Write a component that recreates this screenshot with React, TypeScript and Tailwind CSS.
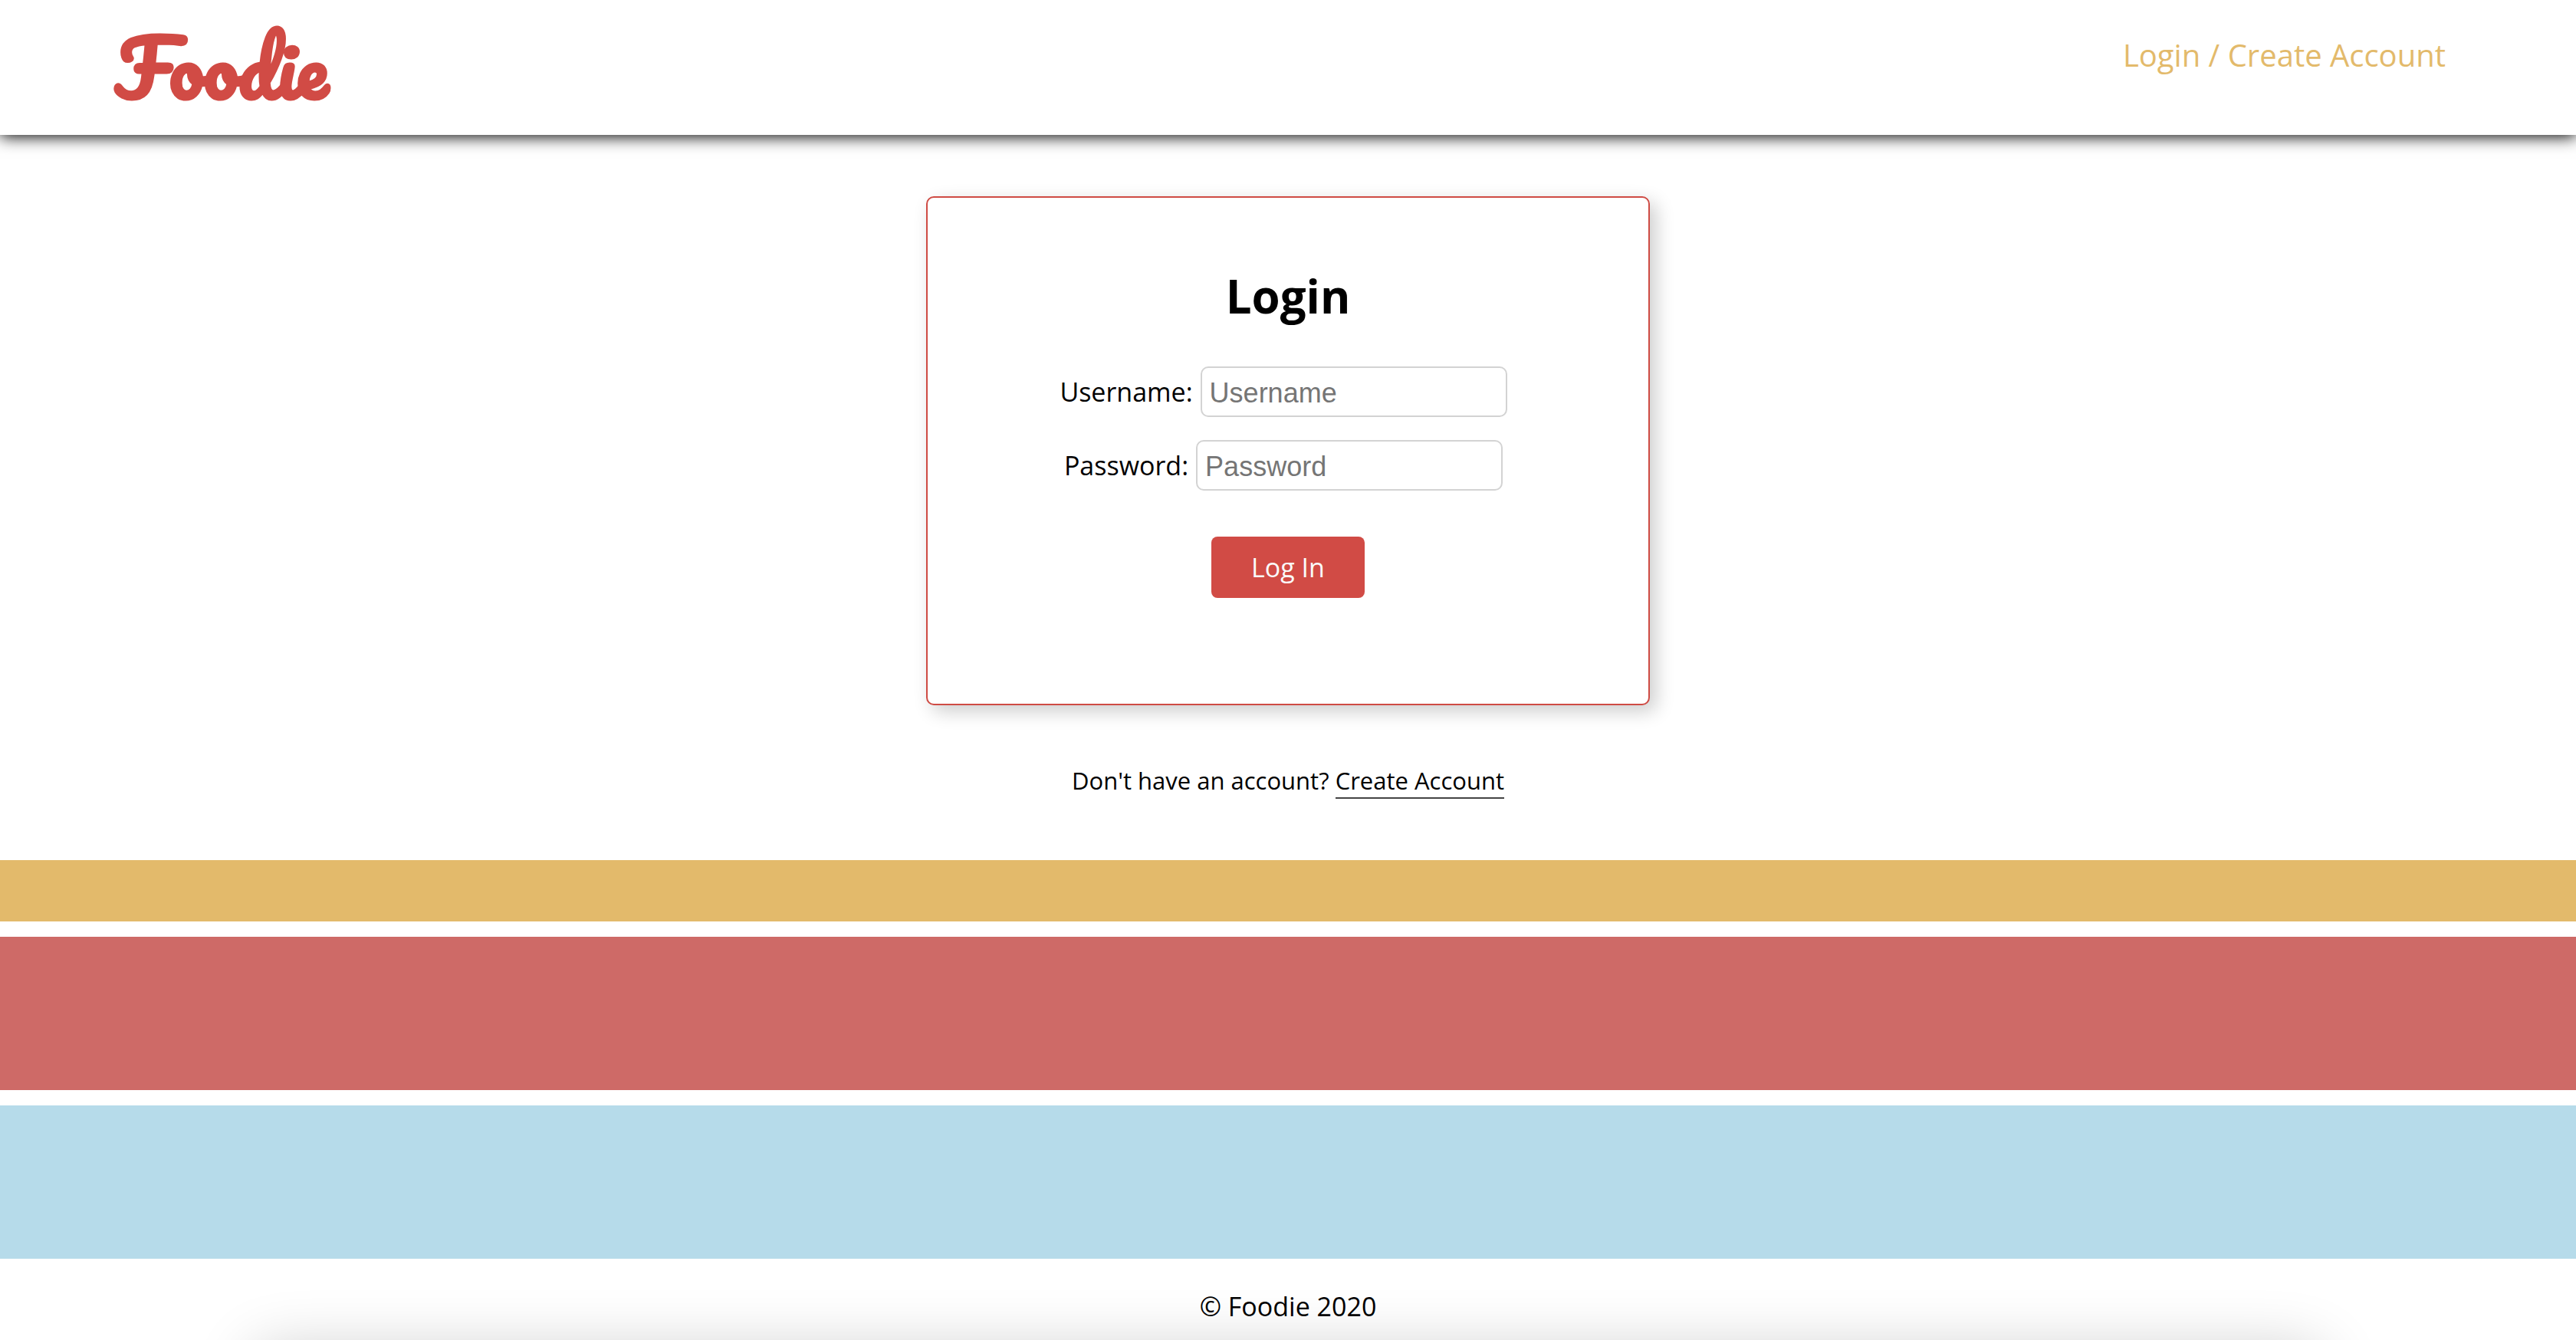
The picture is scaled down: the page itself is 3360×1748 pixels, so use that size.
const bands = [
  { name: "gold", style: "h-20 bg-[#e3ba6b]" },
  { name: "red", style: "h-[200px] bg-[#ce6a67]" },
  { name: "blue", style: "h-[200px] bg-[#b6dbea]" },
];

const fieldStyle =
  "h-[66px] w-[400px] rounded-[10px] border-2 border-[#d3d3d3] bg-white px-2.5 pt-1 font-['Liberation_Sans',sans-serif] text-[36px] text-black placeholder:text-[#757575] placeholder:opacity-100";

function Header() {
  return (
    <header className="flex h-44 items-start justify-between bg-white pl-[150px] pr-[170px] shadow-[0_2px_20px_#000]">
      <a
        href="#home"
        className="font-['Pacifico',cursive] text-[100px] leading-[176px] font-bold text-[#d14b45]"
      >
        Foodie
      </a>
      <nav className="pt-12 text-[40px] leading-[48px] text-[#e3ba6b]">
        <a href="#login">Login / Create Account</a>
      </nav>
    </header>
  );
}

function LoginCard() {
  return (
    <form
      onSubmit={(event) => event.preventDefault()}
      className="flex h-[664px] w-[944px] flex-col items-center rounded-[10px] border-2 border-[#cf4b44] bg-white pt-[84px] shadow-[8px_8px_24px_rgba(0,0,0,0.2)]"
    >
      <h1 className="mb-[48px] text-[60px] leading-[88px] font-bold">Login</h1>
      <div className="mb-[30px] flex items-center gap-2.5 pr-3">
        <label htmlFor="username">Username:</label>
        <input id="username" type="text" placeholder="Username" className={fieldStyle} />
      </div>
      <div className="mb-[60px] flex items-center gap-2.5 pr-3">
        <label htmlFor="password">Password:</label>
        <input id="password" type="password" placeholder="Password" className={fieldStyle} />
      </div>
      <button type="submit" className="h-20 w-[200px] rounded-lg bg-[#d14b45] text-[#fafafa]">
        Log In
      </button>
    </form>
  );
}

export default function App() {
  return (
    <div className="relative min-h-screen overflow-hidden bg-white font-['Trebuchet_MS','Open_Sans',sans-serif] text-[34px] leading-[44px] font-medium text-black">
      <Header />
      <main className="flex flex-col items-center pt-20">
        <LoginCard />
        <p className="mt-[76px] mb-[80px] text-[31px] leading-[44px]">
          Don't have an account?{" "}
          <a href="#create" className="inline-block border-b-2 border-[#444]">
            Create Account
          </a>
        </p>
      </main>
      <div className="flex flex-col gap-5">
        {bands.map((band) => (
          <div key={band.name} className={band.style} />
        ))}
      </div>
      <footer className="pt-10 pb-6 text-center">© Foodie 2020</footer>
      <div className="pointer-events-none absolute inset-x-[330px] top-full mt-[10px] h-40 rounded-3xl shadow-[0_0_80px_rgba(0,0,0,0.2)]" />
    </div>
  );
}
